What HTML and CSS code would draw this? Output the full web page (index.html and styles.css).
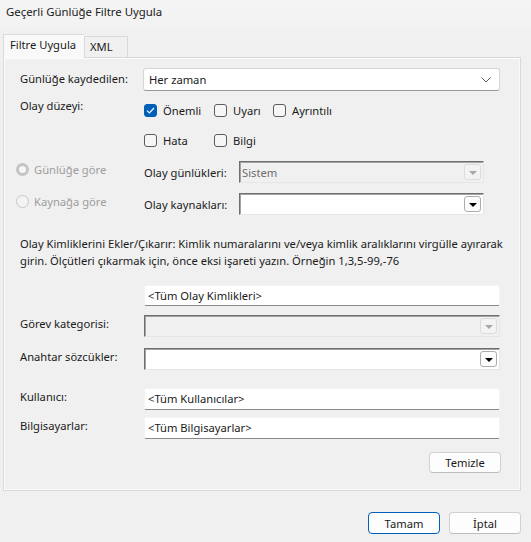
FILE: index.html
```html
<!DOCTYPE html>
<html lang="tr">
<head>
<meta charset="utf-8">
<title>Geçerli Günlüğe Filtre Uygula</title>
<link rel="stylesheet" href="styles.css">
</head>
<body>
<div class="window">
  <div class="titlebar">Geçerli Günlüğe Filtre Uygula</div>
  <div class="tabs">
    <div class="tab tab-active">Filtre Uygula</div>
    <div class="tab">XML</div>
  </div>
  <div class="panel">
    <div class="row row-first">
      <div class="label">Günlüğe kaydedilen:</div>
      <div class="combo-modern">
        <span>Her zaman</span>
        <svg class="chev" width="10" height="6" viewBox="0 0 10 6"><path d="M0.5 0.5 L5 5 L9.5 0.5" fill="none" stroke="#5a5a5a" stroke-width="1"/></svg>
      </div>
    </div>

    <div class="levels">
      <div class="label label-levels">Olay düzeyi:</div>
      <div class="checks">
        <div class="checkline">
          <label class="check w-onemli"><span class="box box-on"><svg width="9" height="7" viewBox="0 0 9 7"><path d="M1 3.6 L3.4 6 L8 1" fill="none" stroke="#fff" stroke-width="1.2"/></svg></span>Önemli</label>
          <label class="check w-uyari"><span class="box"></span>Uyarı</label>
          <label class="check"><span class="box"></span>Ayrıntılı</label>
        </div>
        <div class="checkline checkline-2">
          <label class="check w-onemli"><span class="box"></span>Hata</label>
          <label class="check w-uyari"><span class="box"></span>Bilgi</label>
        </div>
      </div>
    </div>

    <div class="row row-src">
      <div class="radio-opt"><span class="radio radio-on"></span>Günlüğe göre</div>
      <div class="label-small">Olay günlükleri:</div>
      <div class="combo-classic combo-disabled">
        <span>Sistem</span>
        <span class="dd-btn dd-btn-disabled"><span class="tri"></span></span>
      </div>
    </div>
    <div class="row row-src2">
      <div class="radio-opt"><span class="radio"></span>Kaynağa göre</div>
      <div class="label-small">Olay kaynakları:</div>
      <div class="combo-classic">
        <span></span>
        <span class="dd-btn"><span class="tri"></span></span>
      </div>
    </div>

    <p class="desc"><span>Olay Kimliklerini Ekler/Çıkarır: Kimlik numaralarını ve/veya kimlik aralıklarını virgülle ayırarak</span><br><span>girin. Ölçütleri çıkarmak için, önce eksi işareti yazın. Örneğin 1,3,5-99,-76</span></p>

    <div class="row row-ids">
      <div class="label"></div>
      <div class="input">&lt;Tüm Olay Kimlikleri&gt;</div>
    </div>
    <div class="row row-task">
      <div class="label">Görev kategorisi:</div>
      <div class="combo-classic combo-wide combo-disabled">
        <span></span>
        <span class="dd-btn dd-btn-disabled"><span class="tri"></span></span>
      </div>
    </div>
    <div class="row row-key">
      <div class="label">Anahtar sözcükler:</div>
      <div class="combo-classic combo-wide">
        <span></span>
        <span class="dd-btn"><span class="tri"></span></span>
      </div>
    </div>
    <div class="row row-user">
      <div class="label">Kullanıcı:</div>
      <div class="input">&lt;Tüm Kullanıcılar&gt;</div>
    </div>
    <div class="row row-comp">
      <div class="label">Bilgisayarlar:</div>
      <div class="input">&lt;Tüm Bilgisayarlar&gt;</div>
    </div>
    <div class="clear-line">
      <button class="btn">Temizle</button>
    </div>
  </div>
  <div class="footer">
    <button class="btn btn-default">Tamam</button>
    <button class="btn">İptal</button>
  </div>
</div>
</body>
</html>
```

FILE: styles.css
```css
* { box-sizing: border-box; }
html, body { margin: 0; padding: 0; }
body {
  background: #f0f0f0;
  font-family: "Noto Sans", "Open Sans", sans-serif;
  font-size: 11.2px;
  color: #1a1a1a;
}
.window { width: 531px; height: 542px; }
.titlebar {
  height: 30px;
  padding: 3px 0 0 6px;
  line-height: 17px;
  font-size: 11.4px;
  background: linear-gradient(#f4f4f4, #f2f2f2);
  color: #1a1a1a;
}
.tabs {
  display: flex;
  align-items: flex-end;
  margin: 3px 0 0 3px;
  height: 24px;
}
.tab {
  height: 21px;
  padding: 0 5px;
  line-height: 20px;
  border: 1px solid #dadada;
  border-bottom: none;
  background: #f0f0f0;
}
.tab-active {
  height: 24px;
  width: 81px;
  padding: 0 0 0 6px;
  line-height: 19px;
  background: #f9f9f9;
  border-right: none;
  position: relative;
  z-index: 1;
  margin-bottom: -1px;
}
.tab-active + .tab { width: 44px; }
.panel {
  width: 518px;
  height: 434px;
  margin-left: 3px;
  border: 1px solid #d9d9d9;
  box-shadow: inset 1px 1px 0 #fcfcfc, inset -1px -1px 0 #fafafa;
  background: #f0f0f0;
  padding: 10px 19px 0 16px;
}
.row { display: flex; align-items: flex-start; }
.label { width: 124px; line-height: 17px; flex: none; white-space: nowrap; }
.row-first { margin-top: 0; height: 23px; }
.row-first .label { width: 123px; padding-top: 2px; }
.combo-modern {
  flex: none;
  width: 357px;
  height: 23px;
  background: #fff;
  border: 1px solid #d6d6d6;
  border-bottom-color: #9a9a9a;
  border-radius: 3px;
  display: flex;
  align-items: center;
  justify-content: space-between;
  padding: 0 8px 0 5px;
}
.chev { margin-top: 1px; }

.levels { display: flex; margin-top: 9px; }
.label-levels { margin-top: -3px; }
.checks { display: flex; flex-direction: column; }
.checkline { display: flex; align-items: center; height: 21px; }
.checkline-2 { margin-top: 9px; }
.check { display: flex; align-items: center; }
.w-onemli { width: 70px; }
.w-uyari { width: 59px; }
.box {
  width: 13px; height: 13px;
  border: 1px solid #5c5c5c;
  border-radius: 3px;
  background: #f6f6f6;
  margin-right: 6px;
  display: flex; align-items: center; justify-content: center;
  flex: none;
}
.box-on { background: #005fb8; border-color: #005fb8; }

.row-src { margin-top: 10px; height: 22px; align-items: center; }
.row-src2 { margin-top: 10px; height: 22px; align-items: center; }
.radio-opt {
  width: 128px;
  margin: -6px 0 0 -4px;
  display: flex;
  align-items: center;
  color: #9d9d9d;
  flex: none;
}
.radio {
  width: 13px; height: 13px;
  border-radius: 50%;
  border: 1px solid #c6c6c6;
  background: #f3f3f3;
  margin: 0 5px 0 0;
  flex: none;
}
.radio-on {
  border: 3.5px solid #c4c4c4;
  background: #f6f6f6;
}
.label-small { width: 95px; flex: none; white-space: nowrap; }
.combo-classic {
  flex: none;
  width: 245px;
  height: 22px;
  background: #fff;
  border-style: solid;
  border-width: 1px;
  border-color: #6f6f6f #e6e6e6 #e6e6e6 #6f6f6f;
  box-shadow: inset 1px 1px 0 #a3a3a3;
  display: flex;
  align-items: center;
  justify-content: space-between;
  padding: 0 2px 0 2px;
  color: #6d6d6d;
}
.combo-wide { width: 356px; }
.combo-disabled { background: #f0f0f0; }
.dd-btn {
  width: 17px; height: 16px;
  border: 1px solid #adadad;
  border-radius: 3px;
  background: #fdfdfd;
  display: flex; align-items: center; justify-content: center;
}
.tri {
  width: 0; height: 0;
  border-left: 4px solid transparent;
  border-right: 4px solid transparent;
  border-top: 4px solid #000;
  margin-top: 1px;
}
.dd-btn-disabled { border-color: #dcdcdc; background: #f3f3f3; }
.dd-btn-disabled .tri { border-top-color: #a8a8a8; }

.desc {
  margin: 20px 0 0 0;
  line-height: 17px;
  white-space: nowrap;
}
.input {
  flex: none;
  width: 356px;
  height: 21px;
  background: #fff;
  border: 1px solid #f4f4f4;
  border-bottom-color: #8a8a8a;
  border-radius: 2px;
  padding: 0 3px;
  line-height: 19px;
}
.row-ids { margin-top: 16px; }
.row-task { margin-top: 9px; }
.row-key { margin-top: 11px; }
.row-user { margin-top: 18px; }
.row-user .input, .row-comp .input { height: 22px; line-height: 20px; }
.row-comp { margin-top: 7px; }
.clear-line { display: flex; justify-content: flex-end; margin-top: 13px; }
.btn {
  width: 72px;
  height: 21px;
  font: inherit;
  color: #1a1a1a;
  background: #fdfdfd;
  border: 1px solid #d0d0d0;
  border-bottom-color: #bdbdbd;
  border-radius: 4px;
  padding: 0;
  line-height: 19px;
}
.footer {
  display: flex;
  justify-content: flex-end;
  gap: 9px;
  margin: 21px 10px 0 0;
}
.footer .btn { height: 22px; }
.btn-default { border: 1px solid #005fb8; }
```
